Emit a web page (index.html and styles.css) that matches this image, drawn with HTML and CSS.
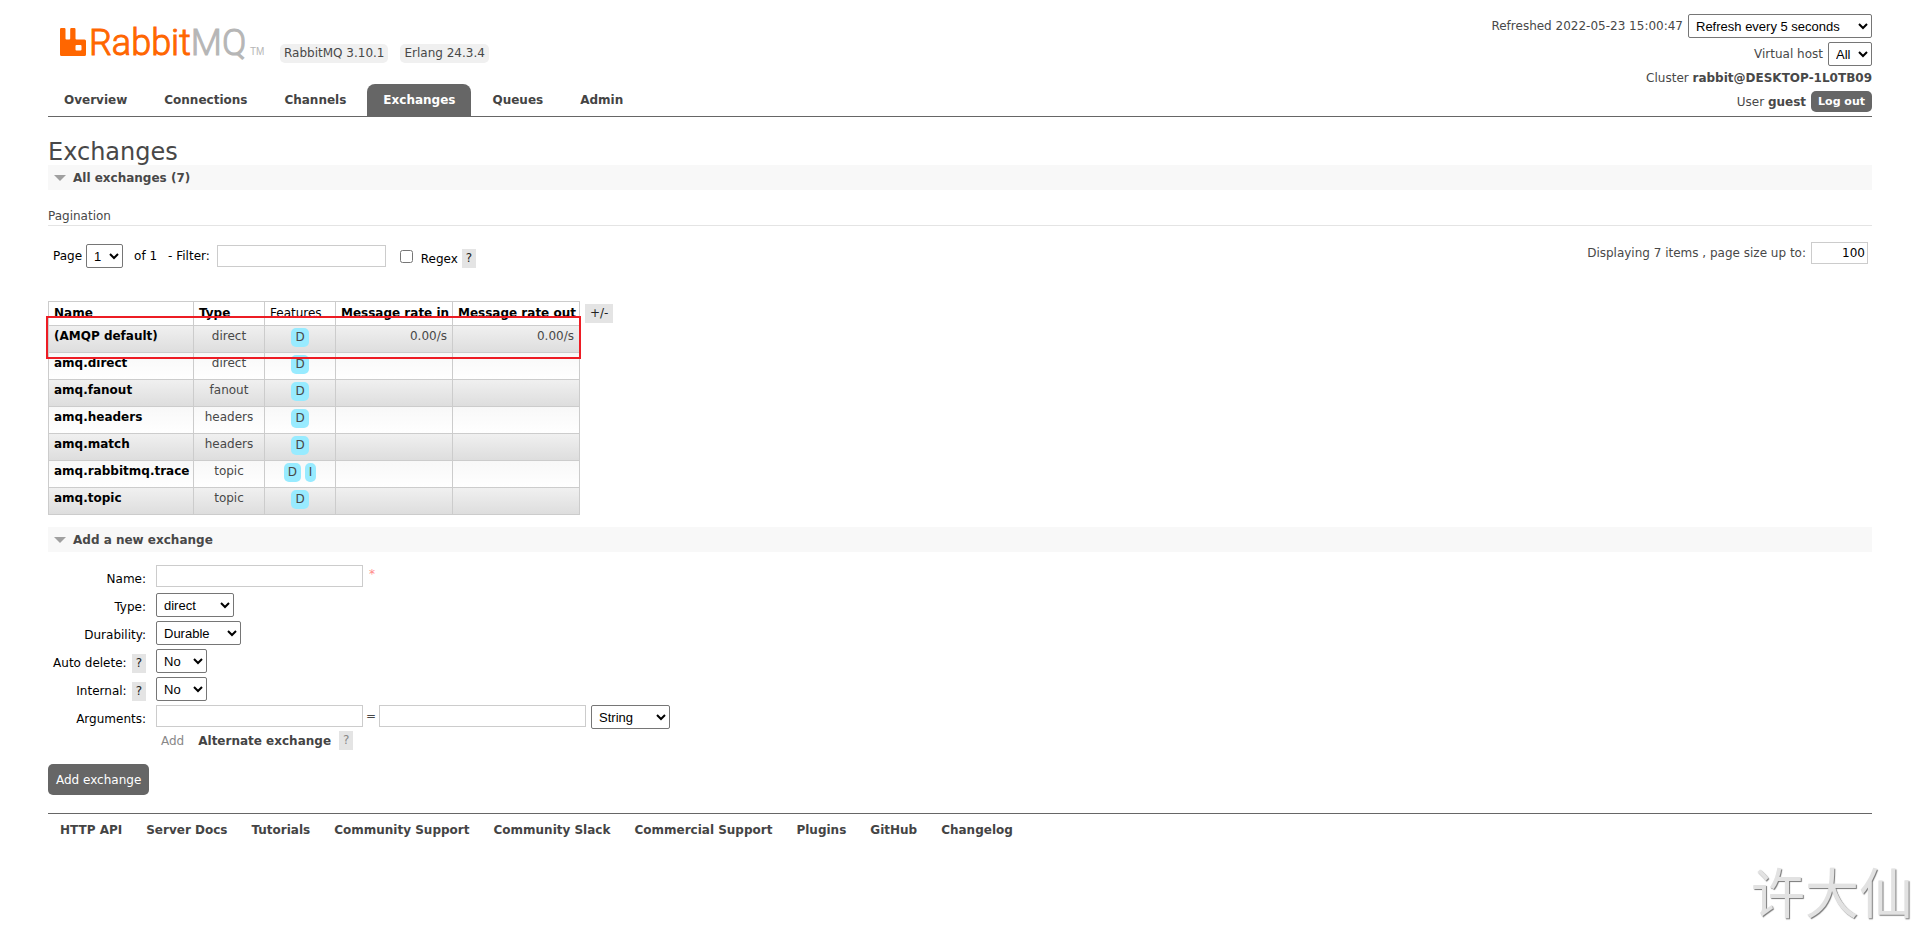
FILE: index.html
```html
<!DOCTYPE html>
<html lang="en">
<head>
<meta charset="utf-8">
<title>RabbitMQ Management</title>
<link rel="stylesheet" href="styles.css">
</head>
<body>
<header class="header">
  <div class="brand">
    <a class="logo" href="#" aria-label="RabbitMQ">
      <svg class="logo-mark" viewBox="0 0 26 28" aria-hidden="true"><path fill="#f60" fill-rule="evenodd" d="M1.200 0H4.300Q5.500 0 5.500 1.200V10.500Q5.500 11.500 6.500 11.500H9.200Q10.200 11.500 10.200 10.500V1.200Q10.200 0 11.400 0H14.300Q15.500 0 15.500 1.200V10.500Q15.500 11.500 16.500 11.500H24.500Q26 11.500 26 13V26.500Q26 28 24.500 28H1.500Q0 28 0 26.500V1.200Q0 0 1.200 0ZM16.500 17Q15.500 17 15.500 18V21.500Q15.500 22.500 16.500 22.500H20.500Q21.500 22.500 21.500 21.500V18Q21.500 17 20.500 17Z"/></svg>
      <span class="logo-text">Rabbit<span class="logo-mq">MQ</span></span>
      <span class="logo-tm">TM</span>
    </a>
    <span class="version">RabbitMQ 3.10.1</span>
    <span class="version">Erlang 24.3.4</span>
  </div>
  <div class="status">
    <div class="status-row"><label for="refresh">Refreshed 2022-05-23 15:00:47</label><select id="refresh" class="w-refresh"><option>Refresh every 5 seconds</option></select></div>
    <div class="status-row"><label for="vhost">Virtual host</label><select id="vhost" class="w-vhost"><option>All</option></select></div>
    <div class="status-line">Cluster <b>rabbit@DESKTOP-1L0TB09</b></div>
    <div class="status-row"><span>User <b>guest</b></span><button class="logout" type="button">Log out</button></div>
  </div>
  <nav class="tabs">
    <a href="#">Overview</a>
    <a href="#">Connections</a>
    <a href="#">Channels</a>
    <a href="#" class="selected">Exchanges</a>
    <a href="#">Queues</a>
    <a href="#">Admin</a>
  </nav>
</header>
<main>
  <h1>Exchanges</h1>
  <h2>All exchanges (7)</h2>
  <h3>Pagination</h3>
  <div class="pager">
    <div class="pager-left">
      <label for="page">Page</label><select id="page" class="w-page"><option>1</option></select>
      <span class="pages">of 1</span>
      <label for="filter">- Filter:</label><input id="filter" class="w-filter" type="text">
      <input id="regex" class="check" type="checkbox"><label class="low" for="regex">Regex</label><button class="help low" type="button">?</button>
    </div>
    <div class="pager-right"><label for="size">Displaying 7 items , page size up to:</label><input id="size" class="w-size" type="text" value="100"></div>
  </div>
  <div class="list">
    <div class="table-wrap">
      <table>
        <colgroup><col class="c-name"><col class="c-type"><col class="c-features"><col class="c-in"><col class="c-out"></colgroup>
        <thead><tr><th>Name</th><th>Type</th><th class="plain">Features</th><th>Message rate in</th><th>Message rate out</th></tr></thead>
        <tbody>
          <tr><td><a href="#">(AMQP default)</a></td><td class="c">direct</td><td class="c"><abbr>D</abbr></td><td class="r">0.00/s</td><td class="r">0.00/s</td></tr>
          <tr><td><a href="#">amq.direct</a></td><td class="c">direct</td><td class="c"><abbr>D</abbr></td><td></td><td></td></tr>
          <tr><td><a href="#">amq.fanout</a></td><td class="c">fanout</td><td class="c"><abbr>D</abbr></td><td></td><td></td></tr>
          <tr><td><a href="#">amq.headers</a></td><td class="c">headers</td><td class="c"><abbr>D</abbr></td><td></td><td></td></tr>
          <tr><td><a href="#">amq.match</a></td><td class="c">headers</td><td class="c"><abbr>D</abbr></td><td></td><td></td></tr>
          <tr><td><a href="#">amq.rabbitmq.trace</a></td><td class="c">topic</td><td class="c"><abbr>D</abbr> <abbr>I</abbr></td><td></td><td></td></tr>
          <tr><td><a href="#">amq.topic</a></td><td class="c">topic</td><td class="c"><abbr>D</abbr></td><td></td><td></td></tr>
        </tbody>
      </table>
      <div class="highlight"></div>
    </div>
    <button class="help columns" type="button">+/-</button>
  </div>
  <h2>Add a new exchange</h2>
  <form class="form">
    <div class="label"><label for="name">Name:</label></div>
    <div class="field"><input id="name" class="w-text" type="text"><span class="mand">*</span></div>
    <div class="label"><label for="type">Type:</label></div>
    <div class="field"><select id="type" class="w-type"><option>direct</option></select></div>
    <div class="label"><label for="durable">Durability:</label></div>
    <div class="field"><select id="durable" class="w-durable"><option>Durable</option></select></div>
    <div class="label"><label for="auto">Auto delete:</label><button class="help" type="button">?</button></div>
    <div class="field"><select id="auto" class="w-no"><option>No</option></select></div>
    <div class="label"><label for="internal">Internal:</label><button class="help" type="button">?</button></div>
    <div class="field"><select id="internal" class="w-no"><option>No</option></select></div>
    <div class="label"><label for="key">Arguments:</label></div>
    <div class="field"><input id="key" class="w-text" type="text"><span class="equals">=</span><input class="w-text" type="text" aria-label="Argument value"><select class="w-string" aria-label="Argument type"><option>String</option></select></div>
    <div class="shortcuts"><span>Add</span><a href="#">Alternate exchange</a><button class="help" type="button">?</button></div>
    <button class="submit" type="submit">Add exchange</button>
  </form>
</main>
<footer>
  <a href="#">HTTP API</a>
  <a href="#">Server Docs</a>
  <a href="#">Tutorials</a>
  <a href="#">Community Support</a>
  <a href="#">Community Slack</a>
  <a href="#">Commercial Support</a>
  <a href="#">Plugins</a>
  <a href="#">GitHub</a>
  <a href="#">Changelog</a>
</footer>
<div class="watermark">许大仙</div>
</body>
</html>
```
FILE: styles.css
```css
* { box-sizing: border-box; }
body { margin: 0; padding: 0 48px; background: #fff; color: #484848; font: 12px/18px Verdana, "DejaVu Sans", sans-serif; }
a { color: #444; font-weight: bold; text-decoration: none; }
select, input { margin: 0; background: #fff; color: #000; }
select { height: 24px; padding: 0 3px; border: 1px solid #767676; border-radius: 2px; font: 13px "Liberation Sans", Arial, sans-serif; }
input[type="text"] { height: 22px; padding: 2px; border: 1px solid #ccc; font: 12px Verdana, "DejaVu Sans", sans-serif; }
button { margin: 0; border: 0; font: inherit; }

.header { display: grid; grid-template: 70px auto / 1fr auto; padding-top: 14px; border-bottom: 1px solid #666; }
.brand { display: flex; align-items: flex-start; gap: 12px; padding: 14px 0 0 12px; }
.logo { display: flex; align-items: flex-start; font-weight: normal; }
.logo-mark { width: 26px; height: 28px; }
.logo-text { width: 156px; margin: 0 5px 0 3px; color: #f60; font: 36px/31px Roboto, sans-serif; font-weight: 300; -webkit-text-stroke: 1px currentColor; }
.logo-mq { color: #b6b6b6; }
.logo-tm { width: 18px; padding-top: 18px; color: #b6b6b6; font: 10px/12px "Liberation Sans", sans-serif; }
.version { margin-top: 16px; padding: 0 4px; border-radius: 5px; background: #f0f0f0; line-height: 19px; }
.status { grid-column: 2; grid-row: 1 / 3; display: flex; flex-direction: column; align-items: flex-end; gap: 4px; padding-bottom: 4px; }
.status-row { display: flex; align-items: center; gap: 5px; }
.status-line { line-height: 17px; }
.logout { height: 21px; padding: 0 7px; border-radius: 5px; background: #666; color: #fff; font-size: 11px; font-weight: bold; }
.tabs { grid-column: 1; display: flex; align-items: flex-end; gap: 5px; }
.tabs a { height: 32px; padding: 0 16px; border-radius: 8px 8px 0 0; line-height: 33px; }
.tabs .selected { background: #666; color: #fff; }

h1 { margin: 22px 0 0; font-size: 24px; line-height: 26px; font-weight: normal; }
h2 { display: flex; align-items: center; gap: 7px; height: 25px; margin: 0; padding-left: 6px; background: #f8f8f8; font-size: 12px; }
h2::before { content: ""; border: 6px solid transparent; border-top-color: #a0a0a0; border-bottom: 0; }
h3 { margin: 17px 0 0; border-bottom: 1px solid #e4e4e4; font-size: 12px; font-weight: normal; }
.pager { display: flex; justify-content: space-between; align-items: flex-start; padding: 16px 4px 0 5px; }
.pager-left { display: flex; align-items: center; padding-top: 2px; color: #000; }
.pager-left select { margin: 0 11px 0 4px; }
.pages { margin-right: 11px; }
.w-filter { width: 169px; margin-left: 7px; }
.check { width: 13px; height: 13px; margin: 0 8px 0 14px; }
.pager-right { display: flex; align-items: center; gap: 5px; }
.w-size { width: 57px; text-align: right; }
.low { margin-top: 5px; }
.help { height: 19px; padding: 0 4px; background: #e4e4e4; color: #222; line-height: 19px; }
.low.help { margin-left: 4px; }

.list { display: flex; align-items: flex-start; gap: 5px; padding: 33px 0 12px; }
.table-wrap { position: relative; }
table { width: 532px; border-collapse: collapse; table-layout: fixed; }
.c-name { width: 145px; }
.c-type, .c-features { width: 71px; }
.c-in { width: 117px; }
.c-out { width: 127px; }
th, td { padding: 0 5px; border: 1px solid #ccc; text-align: left; white-space: nowrap; vertical-align: top; }
th { height: 24px; color: #000; line-height: 23px; }
td { height: 27px; padding-top: 2px; line-height: 16px; }
td a { color: #000; }
.plain { font-weight: normal; }
.c { text-align: center; }
.r { text-align: right; }
tbody tr { background: linear-gradient(#f8f8f8, #fff); }
tbody tr:nth-child(odd) { background: linear-gradient(#f0f0f0, #ddd); }
abbr { display: inline-block; padding: 0 4px; border-radius: 5px; background: #98ebff; line-height: 19px; }
.highlight { position: absolute; inset: 15px -1px auto -2px; height: 43px; border: 2px solid #ed1c24; }
.columns { margin-top: 3px; padding: 0 5px; }

.form { display: grid; grid-template-columns: 98px 1fr; gap: 4px 10px; padding-top: 13px; }
.label { display: flex; justify-content: flex-end; align-items: center; gap: 5px; padding-top: 4px; color: #000; white-space: nowrap; }
.field { display: flex; align-items: flex-start; min-height: 24px; }
.mand { margin-left: 6px; color: #f88; }
.equals { margin: 0 3px; line-height: 22px; }
.shortcuts { grid-column: 2; display: flex; align-items: center; margin-top: -2px; padding-left: 5px; color: #888; }
.shortcuts a { margin: 0 8px 0 14px; }
.shortcuts .help { color: #888; }
.submit { grid-column: 1 / 3; justify-self: start; height: 31px; margin-top: 10px; padding: 0 8px; border-radius: 5px; background: #666; color: #fff; }
.w-refresh { width: 184px; }
.w-vhost { width: 44px; }
.w-page { width: 37px; }
.w-text { width: 207px; }
.w-type { width: 78px; }
.w-durable { width: 85px; }
.w-no { width: 51px; }
.w-string { width: 79px; margin-left: 5px; }
footer { display: flex; gap: 24px; margin-top: 18px; padding: 7px 12px; border-top: 1px solid #666; }
.watermark { position: fixed; right: 7px; bottom: 0; color: #e2e2e2; font: 54px/76px "Noto Sans CJK SC", sans-serif; text-shadow: 1px 1px 1px #777; }
```
